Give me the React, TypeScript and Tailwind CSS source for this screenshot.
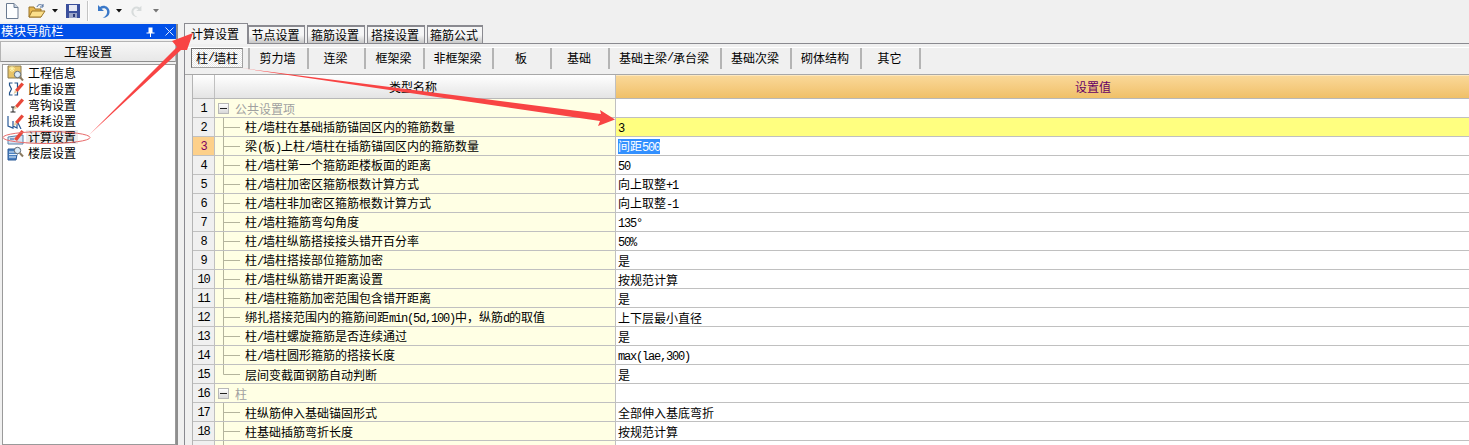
import React from "react";

const FONT = "font-['Noto_Sans_CJK_SC',sans-serif]";

function T({ s }: { s: string }) {
  const parts = s.split(/([\x00-\x7f°]+)/).filter(Boolean);
  return (
    <>
      {parts.map((p, i) =>
        /^[\x00-\x7f°]+$/.test(p) ? (
          <span key={i} className="font-['Liberation_Mono',monospace] text-[12px] tracking-[-1.2px]">
            {p}
          </span>
        ) : (
          <span key={i}>{p}</span>
        )
      )}
    </>
  );
}

const Caret = ({ color = "#111" }: { color?: string }) => (
  <svg width="6" height="4" viewBox="0 0 6 4"><path d="M0 0H6L3 3.500Z" fill={color} /></svg>
);

function Toolbar() {
  return (
    <div className="flex h-6 shrink-0">
      <div className="flex h-[22px] w-[160px] items-center bg-[#f6f6f6] pl-[5px]">
        <svg width="14" height="16" viewBox="0 0 14 16">
          <path d="M1.500 .5H9L13 4.500V15.500H1.500Z" fill="#fdfeff" stroke="#6a7a90" />
          <path d="M9 .5V4.500H13" fill="#c8d4e4" stroke="#6a7a90" />
        </svg>
        <svg className="ml-[9px]" width="18" height="16" viewBox="0 0 18 16">
          <path d="M1 4H6L7 6H13V14H1Z" fill="#e8b850" stroke="#9a7428" />
          <path d="M1 14L4 8H17L13 14Z" fill="#fbdf8a" stroke="#9a7428" />
          <path d="M9 4C10 1 13 1 15 3M15 1V4H12" fill="none" stroke="#4a6a9a" />
        </svg>
        <span className="ml-[6px] flex"><Caret /></span>
        <svg className="ml-[8px]" width="14" height="14" viewBox="0 0 14 14">
          <path d="M0 0H14V14H0Z" fill="#3a4f9c" />
          <path d="M3 1H11V7H3Z" fill="#e8eaf4" />
          <path d="M3 9H11V14H3Z" fill="#9aa4c8" />
          <path d="M7 10H9V13H7Z" fill="#2c3a78" />
        </svg>
        <div className="ml-[7px] h-5 w-[2px] border-l border-[#c4c4c4] bg-white" />
        <svg className="ml-[6px]" width="15" height="15" viewBox="0 0 15 15">
          <path d="M3 1V7H9L6.500 4.800C9 3 13 5 12 9C11.500 11.500 9.500 13 7.500 14C12 14 15 11 14.500 7C14 2.500 8.500 0 5 3Z" fill="#3a78c8" />
        </svg>
        <span className="ml-[6px] flex"><Caret /></span>
        <svg className="ml-[9px]" width="13" height="15" viewBox="0 0 15 15">
          <path d="M12 1V7H6L8.500 4.800C6 3 2 5 3 9C3.500 11.500 5.500 13 7.500 14C3 14 0 11 .5 7C1 2.500 6.500 0 10 3Z" fill="#d8dcdc" />
        </svg>
        <span className="ml-[9px] flex"><Caret color="#777" /></span>
      </div>
    </div>
  );
}

const Pencil = () => (
  <g>
    <path d="M8 9L14.500 1.500L17 3.500L10.500 11Z" fill="#e8483a" />
    <path d="M8 9L10.500 11L6.500 13Z" fill="#e8cfa0" />
  </g>
);

const Glass = ({ x = 0, y = 0 }: { x?: number; y?: number }) => (
  <g transform={`translate(${x} ${y})`}>
    <circle cx="10.500" cy="9.500" r="3.200" fill="#dcecf8" stroke="#606a74" />
    <path d="M12.800 12L16 15.500" stroke="#8a7a60" strokeWidth="2" />
  </g>
);

const navIcons: React.ReactNode[] = [
  <g key="a">
    <path d="M1 1H14V13H1Z" fill="#e8c468" stroke="#8a7a50" />
    <path d="M3 1.500L7 6M7 1.500L3 6M5 1V7M2 3.800H8" stroke="#fff6b0" strokeWidth="1" />
    <Glass />
  </g>,
  <g key="b">
    <path d="M5.500 2H2.500V4L4.500 8L2.500 12V14H5.500M7.500 2H10.500V14H7.500" fill="none" stroke="#24548c" strokeWidth="1.200" />
    <Pencil />
  </g>,
  <g key="c">
    <path d="M4 10H8M6 10V15M3.500 15H8.500" fill="none" stroke="#222" />
    <Pencil />
  </g>,
  <g key="d">
    <path d="M1 3V13L6 15V8M6 13L10 15V8L14 16" fill="none" stroke="#2a5a98" strokeWidth="1.200" />
    <Pencil />
  </g>,
  <g key="e">
    <path d="M1 8L16 6V15H1Z" fill="#d4e4f4" stroke="#5a80a8" />
    <path d="M3 10H7" stroke="#2a5a98" />
    <path d="M7 10L14.500 1L17 3L10 12Z" fill="#e8483a" />
  </g>,
  <g key="f">
    <path d="M1 4H11L9 15H1Z" fill="#4a80c0" stroke="#2a5a98" />
    <path d="M2 7H10M2 9.500H10M2 12H9" stroke="#e4f0fa" />
    <Glass x={0} y={-4} />
  </g>,
];

const navItems = ["工程信息", "比重设置", "弯钩设置", "损耗设置", "计算设置", "楼层设置"];

function Nav() {
  return (
    <div className="flex w-[178px] shrink-0 flex-col border-r-2 border-[#8e8e8e]">
      <div className="flex h-[15px] shrink-0 items-center justify-between bg-[#0050e8] pl-px pr-[2px] text-[12.5px] leading-none text-white">
        <span>模块导航栏</span>
        <span className="flex items-center gap-[10px]">
          <svg width="9" height="10" viewBox="0 0 9 10"><path d="M2.500 .5H6.500V5.500H8.500V6.500H5V10H4V6.500H.5V5.500H2.500Z" fill="#fff" /></svg>
          <svg width="9" height="9" viewBox="0 0 9 9"><path d="M.5 .5L8.500 8.500M8.500 .5L.5 8.500" stroke="#d8e4ff" /></svg>
        </span>
      </div>
      <div className="mt-[2px] flex h-[21px] shrink-0 items-center justify-center border border-[#b4b4b4] border-b-[#8e8e8e] bg-gradient-to-b from-[#f7f7f7] to-[#e8e8e8] text-[12px] leading-none text-black">
        工程设置
      </div>
      <div className="ml-[2px] mt-[2px] flex-1 border border-[#9a9a9a] bg-white">
        {navItems.map((n, i) => (
          <div key={n} className="flex h-4 items-center pl-[4px] text-[12px] leading-none text-black">
            <svg width="17" height="16" viewBox="0 0 17 16" className="shrink-0">{navIcons[i]}</svg>
            <span className={i === 4 ? "ml-[2px] bg-[#ececec] px-[2px] leading-[14px]" : "ml-[4px]"}>{n}</span>
          </div>
        ))}
      </div>
    </div>
  );
}

const topTabs = ["节点设置", "箍筋设置", "搭接设置", "箍筋公式"];
const topWidths = ["w-[57px]", "w-[58px]", "w-[58px]", "w-[56px]"];

function TopTabs() {
  return (
    <div className="flex h-[20px] shrink-0 items-end gap-[2px] border-b border-[#8a8a90]">
      <div className="z-10 -mb-px -mr-[2px] flex h-[21px] w-[64px] items-center justify-center border border-b-0 border-[#8a8a90] bg-[#f4f4f4] pr-[2px] text-[12px] leading-none text-black">
        计算设置
      </div>
      {topTabs.map((t, i) => (
        <div key={t} className={`flex h-[18px] items-center justify-center border-x border-t-2 border-[#8a8a90] bg-gradient-to-b from-[#f6f6f6] from-50% to-[#c8c8c8] pr-[2px] text-[12px] leading-none text-black ${topWidths[i]}`}>
          {t}
        </div>
      ))}
    </div>
  );
}

const subTabs = [
  { t: "剪力墙", w: "w-[59px]" },
  { t: "连梁", w: "w-[57px]" },
  { t: "框架梁", w: "w-[59px]" },
  { t: "非框架梁", w: "w-[69px]" },
  { t: "板", w: "w-[58px]" },
  { t: "基础", w: "w-[58px]" },
  { t: "基础主梁/承台梁", w: "w-[112px]" },
  { t: "基础次梁", w: "w-[70px]" },
  { t: "砌体结构", w: "w-[70px]" },
  { t: "其它", w: "w-[59px]" },
];

function SubTabs() {
  return (
    <div className="h-[31px] shrink-0 border-b border-[#a8a8a8] pt-[3px]">
      <div className="flex h-[22px] border-t border-white pl-[6px] text-[12px] leading-none text-black">
        <div className="flex w-[57px] items-start">
          <div className="flex h-[20px] w-[52px] items-center justify-center border border-[#a0a0a0] border-l-[#707070] border-t-[#707070] bg-[repeating-conic-gradient(#e6e6e6_0_25%,#ffffff_0_50%)] bg-[length:2px_2px]">
            <T s="柱/墙柱" />
          </div>
        </div>
        {subTabs.map((s) => (
          <div key={s.t} className={`flex h-[21px] items-center justify-center border-l-2 border-[#b4b4b4] pb-[1px] pr-[2px] ${s.w}`}>
            <T s={s.t} />
          </div>
        ))}
        <div className="h-[21px] border-l-2 border-[#b4b4b4]" />
      </div>
    </div>
  );
}

type Row = { name: string; value?: string; group?: boolean; last?: boolean };

const rows: Row[] = [
  { name: "公共设置项", group: true },
  { name: "柱/墙柱在基础插筋锚固区内的箍筋数量", value: "3" },
  { name: "梁(板)上柱/墙柱在插筋锚固区内的箍筋数量", value: "间距500" },
  { name: "柱/墙柱第一个箍筋距楼板面的距离", value: "50" },
  { name: "柱/墙柱加密区箍筋根数计算方式", value: "向上取整+1" },
  { name: "柱/墙柱非加密区箍筋根数计算方式", value: "向上取整-1" },
  { name: "柱/墙柱箍筋弯勾角度", value: "135°" },
  { name: "柱/墙柱纵筋搭接接头错开百分率", value: "50%" },
  { name: "柱/墙柱搭接部位箍筋加密", value: "是" },
  { name: "柱/墙柱纵筋错开距离设置", value: "按规范计算" },
  { name: "柱/墙柱箍筋加密范围包含错开距离", value: "是" },
  { name: "绑扎搭接范围内的箍筋间距min(5d,100)中，纵筋d的取值", value: "上下层最小直径" },
  { name: "柱/墙柱螺旋箍筋是否连续通过", value: "是" },
  { name: "柱/墙柱圆形箍筋的搭接长度", value: "max(lae,300)" },
  { name: "层间变截面钢筋自动判断", value: "是", last: true },
  { name: "柱", group: true },
  { name: "柱纵筋伸入基础锚固形式", value: "全部伸入基底弯折" },
  { name: "柱基础插筋弯折长度", value: "按规范计算" },
  { name: "", value: "是" },
];

function GridRow({ r, i }: { r: Row; i: number }) {
  const n = i + 1;
  const current = n === 3;
  const yellow = n === 2;
  return (
    <div className="flex h-[19px] shrink-0 border-b border-[#c0c0c0] text-[12px] leading-none text-black">
      <div className={`flex w-[22px] shrink-0 items-center justify-center border-r border-[#c0c0c0] pt-[2px] font-['Liberation_Mono',monospace] tracking-[-1.2px] ${current ? "bg-[#fdd08a] text-[#800060]" : "bg-[#f0f0f0]"}`}>
        {n}
      </div>
      <div className="flex w-[401px] shrink-0 items-center border-r border-[#c0c0c0] bg-[#ffffe4]">
        {r.group ? (
          <>
            <div className="ml-[3px] flex h-[11px] w-[11px] items-center justify-center border border-[#b8b8b8] bg-gradient-to-b from-white to-[#d8d8d8]">
              <div className="h-px w-[7px] bg-[#222]" />
            </div>
            <span className="ml-[6px] pt-[2px] text-[#a0a0a0]">{r.name}</span>
          </>
        ) : (
          <>
            <svg width="30" height="18" viewBox="0 0 30 18" className="shrink-0">
              <path d={r.last ? "M8.500 0V9.500H25" : "M8.500 0V18M8.500 9.500H25"} fill="none" stroke="#b4b49c" />
            </svg>
            <span className="whitespace-nowrap pt-[2px]"><T s={r.name} /></span>
          </>
        )}
      </div>
      <div className={`flex flex-1 items-center pl-[2px] ${yellow ? "bg-[#ffff80]" : "bg-white"}`}>
        {current ? (
          <span className="bg-[#3390ff] pt-[1px] text-white"><T s={r.value ?? ""} /></span>
        ) : (
          <span className="whitespace-nowrap pt-[2px]"><T s={r.value ?? ""} /></span>
        )}
      </div>
    </div>
  );
}

function Grid() {
  return (
    <div className="ml-[7px] flex min-h-0 flex-1 flex-col overflow-hidden border-l border-[#b4b4b4]">
      <div className="flex h-[24px] shrink-0 border-b border-[#b8b8b8] text-[12px] leading-none">
        <div className="w-[22px] shrink-0 border-r border-[#c0c0c0] bg-gradient-to-b from-white to-[#e4e4e4]" />
        <div className="flex w-[401px] shrink-0 items-center justify-center border-r border-[#c0c0c0] bg-gradient-to-b from-white to-[#e4e4e4] pr-[4px] text-black">
          类型名称
        </div>
        <div className="flex flex-1 items-center border-t border-[#fde8c0] bg-gradient-to-b from-[#fad898] to-[#f0c068] pl-[459px] text-[#660066]">
          设置值
        </div>
      </div>
      {rows.map((r, i) => (
        <GridRow key={i} r={r} i={i} />
      ))}
    </div>
  );
}

function Annotations() {
  return (
    <svg className="pointer-events-none absolute left-0 top-0 z-20" width="1469" height="445" viewBox="0 0 1469 445">
      <ellipse cx="46.500" cy="137.500" rx="43.500" ry="6" fill="none" stroke="#e86a6a" strokeWidth="1" />
      <path d="M89 135L177 47L172 41L193 33L187 50L181 50Z" fill="#f84444" />
      <path d="M241 68L601 114L600 110L615 119.500L598 126L600 121Z" fill="#f84444" />
    </svg>
  );
}

export default function App() {
  return (
    <div className={`relative flex h-[445px] w-[1469px] flex-col overflow-hidden bg-[#f0f0f0] ${FONT}`}>
      <Toolbar />
      <div className="flex min-h-0 flex-1">
        <Nav />
        <div className="flex min-w-0 flex-1 flex-col pl-[6px]">
          <TopTabs />
          <div className="flex min-h-0 flex-1 flex-col border-l border-[#8a8a90]">
            <SubTabs />
            <Grid />
          </div>
        </div>
      </div>
      <Annotations />
    </div>
  );
}
